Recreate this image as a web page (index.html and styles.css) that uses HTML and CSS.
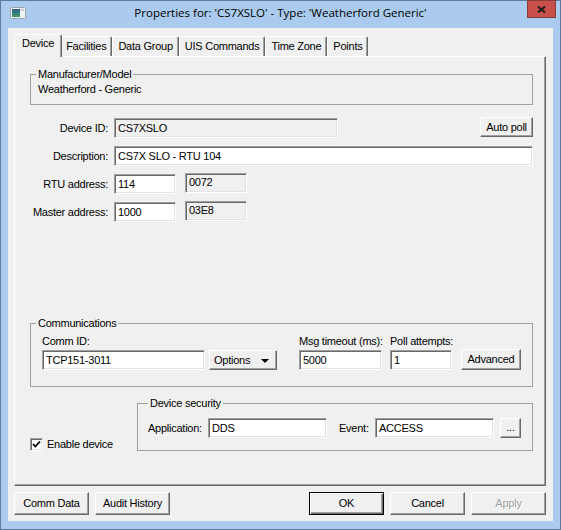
FILE: index.html
```html
<!DOCTYPE html>
<html>
<head>
<meta charset="utf-8">
<link rel="stylesheet" href="styles.css">
</head>
<body>
<div class="window">
  <div class="titlebar">
    <div class="tb-left">
      <svg class="appicon" width="16" height="12" viewBox="0 0 16 12">
        <defs>
          <linearGradient id="ig" x1="0" y1="0" x2="0" y2="1">
            <stop offset="0" stop-color="#2d5f8c"/>
            <stop offset="1" stop-color="#3e9a62"/>
          </linearGradient>
        </defs>
        <rect x="0.5" y="0.5" width="15" height="11" rx="1" fill="#eef2f5" stroke="#98a4ae"/>
        <rect x="2" y="2" width="8" height="8" fill="url(#ig)"/>
        <rect x="11" y="2" width="3" height="2" fill="#c3ccd3"/>
      </svg>
    </div>
    <div class="title">Properties for: 'CS7XSLO' - Type: 'Weatherford Generic'</div>
    <div class="tb-right">
      <div class="close">
        <svg width="9" height="7" viewBox="0 0 9 7"><path d="M1 0.5 L8 6.5 M8 0.5 L1 6.5" stroke="#1c1c1c" stroke-width="2"/></svg>
      </div>
    </div>
  </div>

  <div class="client">
    <div class="tabs">
      <div class="tab active">Device</div>
      <div class="tab">Facilities</div>
      <div class="tab">Data Group</div>
      <div class="tab">UIS Commands</div>
      <div class="tab">Time Zone</div>
      <div class="tab">Points</div>
    </div>

    <div class="panel">
      <fieldset class="group mfr">
        <legend>Manufacturer/Model</legend>
        <div class="static">Weatherford - Generic</div>
      </fieldset>

      <div class="form">
        <div class="row">
          <div class="lbl">Device ID:</div>
          <div class="edit ro w-devid">CS7XSLO</div>
          <div class="btn autopoll">Auto poll</div>
        </div>
        <div class="row">
          <div class="lbl">Description:</div>
          <div class="edit grow">CS7X SLO - RTU 104</div>
        </div>
        <div class="row">
          <div class="lbl">RTU address:</div>
          <div class="edit w-addr">114</div>
          <div class="edit ro hex">0072</div>
        </div>
        <div class="row">
          <div class="lbl">Master address:</div>
          <div class="edit w-addr">1000</div>
          <div class="edit ro hex">03E8</div>
        </div>
      </div>

      <fieldset class="group comm">
        <legend>Communications</legend>
        <div class="comm-row">
          <div class="col c-comm">
            <div class="cap">Comm ID:</div>
            <div class="edit">TCP151-3011</div>
          </div>
          <div class="btn options"><span>Options</span><i class="arrow"></i></div>
          <div class="col c-msg">
            <div class="cap">Msg timeout (ms):</div>
            <div class="edit">5000</div>
          </div>
          <div class="col c-poll">
            <div class="cap">Poll attempts:</div>
            <div class="edit">1</div>
          </div>
          <div class="btn advanced">Advanced</div>
        </div>
      </fieldset>

      <div class="bottomrow">
        <div class="check">
          <div class="box">
            <svg width="9" height="9" viewBox="0 0 9 9"><path d="M1 4 L3.3 6.5 L8 1.5" fill="none" stroke="#000" stroke-width="1.8"/></svg>
          </div>
          <span>Enable device</span>
        </div>
        <fieldset class="group security">
          <legend>Device security</legend>
          <div class="sec-row">
            <div class="slbl s-app">Application:</div>
            <div class="edit w-sec">DDS</div>
            <div class="slbl s-evt">Event:</div>
            <div class="edit w-sec">ACCESS</div>
            <div class="btn dots">...</div>
          </div>
        </fieldset>
      </div>
    </div>

    <div class="buttons">
      <div class="btn">Comm Data</div>
      <div class="btn">Audit History</div>
      <div class="spacer"></div>
      <div class="btn default">OK</div>
      <div class="btn">Cancel</div>
      <div class="btn disabled">Apply</div>
    </div>
  </div>
</div>
</body>
</html>
```

FILE: styles.css
```css
* { box-sizing: border-box; }

html, body {
  margin: 0;
  padding: 0;
}

body {
  width: 561px;
  height: 530px;
  overflow: hidden;
  font-family: "Liberation Sans", Arial, sans-serif;
  font-size: 11px;
  letter-spacing: -0.25px;
  color: #000;
  background: #aacbee;
}

.window {
  width: 561px;
  height: 530px;
  border: 1px solid #5d7b9c;
  background: #aacbee;
  padding: 0 7px 8px 7px;
  display: flex;
  flex-direction: column;
}

/* title bar */
.titlebar {
  height: 27px;
  margin: 0 -7px;
  display: grid;
  grid-template-columns: 1fr auto 1fr;
  align-items: start;
}

.tb-left { display: flex; }

.appicon {
  display: block;
  margin: 6px 0 0 9px;
}

.title {
  font-family: "Open Sans", "Noto Sans", sans-serif;
  font-size: 11.5px;
  letter-spacing: 0;
  line-height: 16px;
  padding-top: 4px;
  white-space: nowrap;
  color: #000;
}

.tb-right {
  display: flex;
  justify-content: flex-end;
}

.close {
  width: 29px;
  height: 18px;
  margin: -1px 4px 0 0;
  background: #c7504b;
  border: 1px solid #8a3d38;
  display: flex;
  align-items: center;
  justify-content: center;
}

.close svg { display: block; }

/* client */
.client {
  flex: 1;
  background: #f0f0f0;
  padding: 6px 7px 6px 6px;
  display: flex;
  flex-direction: column;
}

.tabs {
  height: 22px;
  display: flex;
  align-items: flex-end;
  padding-left: 2px;
}

.tab {
  height: 20px;
  padding: 0 5px;
  line-height: 18px;
  border-top: 1px solid #fff;
  border-left: 1px solid #fff;
  border-right: 1px solid #696969;
  box-shadow: inset -1px 0 #a0a0a0;
  border-radius: 2px 2px 0 0;
  white-space: nowrap;
  position: relative;
}

.tab.active {
  height: 23px;
  margin: 0 -2px -1px;
  padding: 0 7px;
  line-height: 16px;
  background: #f0f0f0;
  z-index: 1;
}

.panel {
  flex: 1;
  border-style: solid;
  border-width: 1px;
  border-color: #fff #696969 #696969 #fff;
  box-shadow: inset -1px -1px #a0a0a0;
  padding: 0 12px 0 15px;
  display: flex;
  flex-direction: column;
}

/* group boxes */
.group {
  border: 1px solid #a0a0a0;
  margin: 0;
  padding: 0;
  min-width: 0;
}

.group legend {
  padding: 0 2px;
  line-height: 13px;
}

.mfr {
  margin-top: 11px;
  padding: 2px 7px 8px;
}

.mfr legend { margin-left: -2px; }

.static { line-height: 13px; }

/* form rows */
.form {
  margin-top: 13px;
  display: flex;
  flex-direction: column;
  gap: 8px;
}

.row {
  display: flex;
  align-items: center;
  height: 20px;
}

.lbl {
  width: 78px;
  margin-right: 6px;
  text-align: right;
  white-space: nowrap;
}

.edit {
  height: 20px;
  border: 1px solid;
  border-color: #a0a0a0 #fff #fff #a0a0a0;
  box-shadow: inset 1px 1px #696969, inset -1px -1px #e3e3e3;
  background: #fff;
  padding: 0 2px 0 3px;
  line-height: 18px;
  white-space: nowrap;
  overflow: hidden;
}

.edit.ro { background: #f0f0f0; }

.w-devid { width: 224px; }
.grow { flex: 1; }
.w-addr { width: 62px; }

.hex {
  width: 62px;
  margin-left: 9px;
  margin-top: -3px;
  line-height: 16px;
}

/* buttons */
.btn {
  height: 20px;
  border: 1px solid;
  border-color: #fff #696969 #696969 #fff;
  box-shadow: inset -1px -1px #a0a0a0;
  background: #f0f0f0;
  text-align: center;
  line-height: 18px;
  white-space: nowrap;
}

.autopoll {
  width: 53px;
  margin-left: auto;
  margin-top: -2px;
}

/* communications */
.comm {
  margin-top: 95px;
  padding: 5px 11px 16px;
}

.comm legend { margin-left: -6px; }

.comm-row {
  display: flex;
  align-items: flex-end;
}

.col {
  display: flex;
  flex-direction: column;
}

.cap {
  line-height: 13px;
  margin-bottom: 2px;
  white-space: nowrap;
}

.c-comm { width: 163px; }

.options {
  width: 68px;
  margin-left: 4px;
  display: flex;
  align-items: center;
  justify-content: space-between;
  padding: 0 7px 0 4px;
}

.arrow {
  width: 0;
  height: 0;
  border-left: 4px solid transparent;
  border-right: 4px solid transparent;
  border-top: 4px solid #000;
  margin-top: 1px;
}

.c-msg { width: 83px; margin-left: 22px; }
.c-poll { width: 62px; margin-left: 8px; }

.advanced {
  width: 60px;
  height: 21px;
  margin-left: 9px;
  line-height: 19px;
}

/* bottom row */
.bottomrow {
  margin-top: 10px;
  display: flex;
  align-items: flex-end;
}

.check {
  width: 107px;
  height: 13px;
  display: flex;
  align-items: center;
}

.box {
  width: 13px;
  height: 13px;
  border: 1px solid;
  border-color: #a0a0a0 #fff #fff #a0a0a0;
  box-shadow: inset 1px 1px #696969, inset -1px -1px #e3e3e3;
  background: #fff;
  display: flex;
  align-items: center;
  justify-content: center;
  flex: none;
}

.box svg { display: block; }

.check span {
  margin-left: 4px;
  line-height: 13px;
  white-space: nowrap;
}

.security {
  flex: 1;
  padding: 8px 11px 12px 10px;
}

.sec-row {
  display: flex;
  align-items: center;
}

.slbl { white-space: nowrap; }
.s-app { width: 60px; }
.s-evt { width: 36px; margin-left: 12px; }
.w-sec { width: 119px; }

.dots {
  width: 21px;
  margin-left: 6px;
  margin-top: -1px;
  line-height: 16px;
}

/* dialog buttons */
.buttons {
  margin-top: 6px;
  height: 23px;
  display: flex;
  gap: 6px;
}

.buttons .btn {
  width: 75px;
  height: 23px;
  line-height: 21px;
}

.spacer { flex: 1; }

.btn.default {
  border: 1px solid #000;
  box-shadow: inset 1px 1px #fff, inset -1px -1px #696969, inset -2px -2px #a0a0a0;
}

.btn.disabled {
  color: #a0a0a0;
  text-shadow: 1px 1px #fff;
}
```
